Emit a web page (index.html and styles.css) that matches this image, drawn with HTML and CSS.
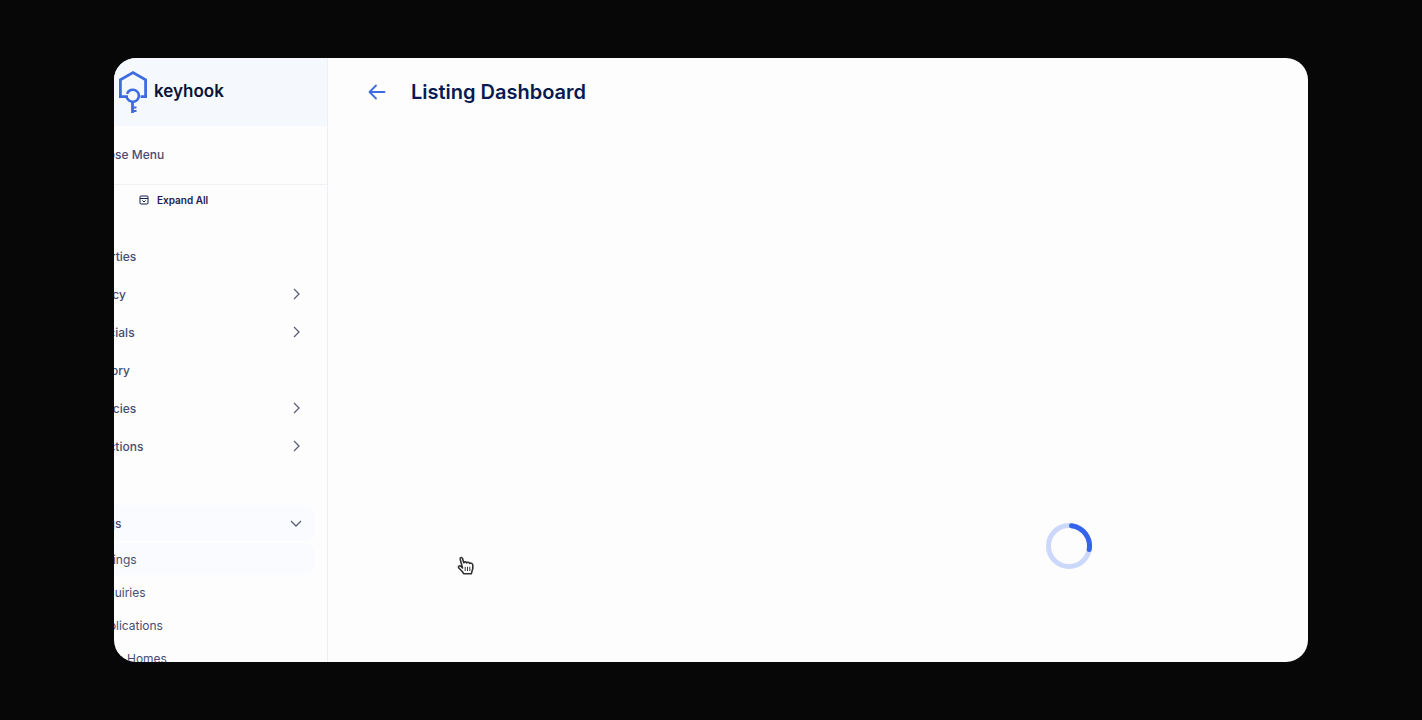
FILE: index.html
```html
<!DOCTYPE html>
<html lang="en">
  <head>
    <meta charset="UTF-8" />
    <title>Keyhook - Listing Dashboard</title>
    <link rel="stylesheet" href="styles.css">
  </head>
  <body>
    <div class="window">
      <aside class="sidebar">
        <a class="brand" href="#">
          <svg class="brand-logo" width="30" height="44" viewBox="0 0 30 44" fill="none" stroke="#3d6be0" stroke-width="2.800">
            <path d="M10 26.700H2.400V9.800L15 2.600L27.600 9.800V26.700H22.500" />
            <path d="M9 23.800A6.100 6.100 0 1 1 9.800 29.300L8.200 26.700" stroke-width="2.500" />
            <path d="M14.500 32V43" />
            <path d="M15 37.500H18.500M15 41H18.500" stroke-width="2" />
          </svg>
          <span class="brand-name">keyhook</span>
        </a>

        <button class="close-menu">Close Menu</button>

        <button class="expand-all">
          <svg width="10" height="10" viewBox="0 0 10 10" fill="none" stroke="#14214f">
            <rect x="1" y="1" width="8" height="8" rx="1" />
            <path d="M1 3.500H9M3.500 5.500L5 7L6.500 5.500" />
          </svg>
          Expand All
        </button>

        <nav class="menu">
          <a class="menu-item" href="#">Properties</a>
          <a class="menu-item" href="#">Tenancy
            <svg class="chevron" viewBox="0 0 12 12"><path d="M4 1L9 6L4 11" /></svg>
          </a>
          <a class="menu-item" href="#">Financials
            <svg class="chevron" viewBox="0 0 12 12"><path d="M4 1L9 6L4 11" /></svg>
          </a>
          <a class="menu-item" href="#">Directory</a>
          <a class="menu-item" href="#">Vacancies
            <svg class="chevron" viewBox="0 0 12 12"><path d="M4 1L9 6L4 11" /></svg>
          </a>
          <a class="menu-item" href="#">Inspections
            <svg class="chevron" viewBox="0 0 12 12"><path d="M4 1L9 6L4 11" /></svg>
          </a>
          <a class="menu-item open" href="#">Listings
            <svg class="chevron" viewBox="0 0 12 12"><path d="M1 4L6 9L11 4" /></svg>
          </a>
          <div class="submenu">
            <a class="submenu-item active" href="#">Listings</a>
            <a class="submenu-item" href="#">Enquiries</a>
            <a class="submenu-item" href="#">Applications</a>
            <a class="submenu-item" href="#">Open Homes</a>
          </div>
        </nav>
      </aside>

      <main class="main">
        <header class="page-header">
          <button class="back" aria-label="Back">
            <svg width="18" height="16" viewBox="0 0 18 16" fill="none" stroke="#3d6be0" stroke-width="1.800" stroke-linecap="round" stroke-linejoin="round">
              <path d="M16.500 8H1.500M8 1.500L1.500 8L8 14.500" />
            </svg>
          </button>
          <h1>Listing Dashboard</h1>
        </header>
        <div class="loading">
          <svg class="spinner" viewBox="0 0 48 48" fill="none" stroke-width="5">
            <circle cx="24" cy="24" r="20.500" stroke="#ccd8fa" />
            <path d="M26.500 3.700A20.500 20.500 0 0 1 44.200 27.500" stroke="#3564ec" stroke-linecap="round" />
          </svg>
        </div>
      </main>

      <svg class="cursor" width="18" height="20" viewBox="0 0 18 20" fill="#fff" stroke="#333" stroke-width="1.600" stroke-linejoin="round">
        <path d="M5.500 12L3.200 3.200C2.800 1.200 5 .800 5.500 2.600L6.800 6.800C7.500 5.500 9.300 5.600 9.600 6.900C10.500 5.800 12.300 6.200 12.500 7.400C14 6.700 15.800 7.400 15.800 9.200V12.500L14.300 17.800H6.800L5.200 15.500L1.600 11.800C.900 10.500 2.500 9.300 3.800 10.300Z" />
        <path d="M8.200 10.800V15M10.500 10.800V15M12.800 10.800V15" stroke-width="1" />
      </svg>
    </div>
  </body>
</html>
```

FILE: styles.css
```css
* {
  box-sizing: border-box;
}

body {
  font-family: Inter, "Open Sans", sans-serif;
  font-size: 12px;
  background-color: #070707;
  color: #484d70;
  margin: 0;
  height: 100vh;
  padding: 58px 114px;
}

a {
  color: inherit;
  text-decoration: none;
}

button {
  font: inherit;
  color: inherit;
  background: none;
  border: none;
  padding: 0;
  cursor: pointer;
}

.window {
  position: relative;
  display: flex;
  height: 100%;
  background-color: #fdfdfe;
  border-radius: 22px;
  overflow: hidden;
}

/* the menu is partly slid out of the window on the left */
.sidebar {
  display: flex;
  flex-direction: column;
  flex-shrink: 0;
  width: 270px;
  margin-left: -56px;
  border-right: 1px solid #eeeff3;
}

.brand {
  display: flex;
  align-items: center;
  flex-shrink: 0;
  gap: 6px;
  height: 68px;
  padding-left: 60px;
  background-color: #f5f9fd;
}

.brand-name {
  font-size: 17px;
  font-weight: 600;
  line-height: 24px;
  padding-bottom: 2px;
  color: #0b1437;
}

.close-menu {
  flex-shrink: 0;
  height: 59px;
  padding-left: 38px;
  padding-bottom: 2px;
  border-bottom: 1px solid #f1f1f5;
  font-weight: 500;
  text-align: left;
}

.expand-all {
  display: flex;
  align-items: center;
  flex-shrink: 0;
  gap: 8px;
  height: 30px;
  padding-left: 81px;
  font-size: 10px;
  font-weight: 600;
  color: #14214f;
}

.menu {
  display: flex;
  flex-direction: column;
  gap: 2px;
  padding: 23px 12px 0 0;
}

.menu-item {
  display: flex;
  align-items: center;
  justify-content: space-between;
  flex-shrink: 0;
  height: 36px;
  padding: 0 13px 0 19px;
  border-radius: 10px;
  font-weight: 500;
}

.menu-item.open {
  margin-top: 39px;
  background-color: #fafbfe;
}

.chevron {
  width: 12px;
  height: 12px;
  fill: none;
  stroke: #5b5f7c;
  stroke-width: 1.3;
}

.submenu {
  display: flex;
  flex-direction: column;
  gap: 1px;
}

.submenu-item {
  display: flex;
  align-items: center;
  height: 32px;
  padding-left: 35px;
  border-radius: 10px;
}

.submenu-item.active {
  background-color: #fafbfe;
}

.main {
  display: flex;
  flex-direction: column;
  flex: 1;
}

.page-header {
  display: flex;
  align-items: center;
  gap: 25px;
  height: 68px;
  padding-left: 40px;
}

.back {
  display: flex;
}

h1 {
  margin: 0;
  font-size: 20px;
  font-weight: 600;
  line-height: 28px;
  color: #071a52;
}

.loading {
  display: flex;
  flex: 1;
  align-items: flex-end;
  justify-content: flex-end;
  padding: 0 215px 92px 0;
}

.spinner {
  width: 48px;
  height: 48px;
}

.cursor {
  position: absolute;
  left: 343px;
  top: 498px;
}
```
